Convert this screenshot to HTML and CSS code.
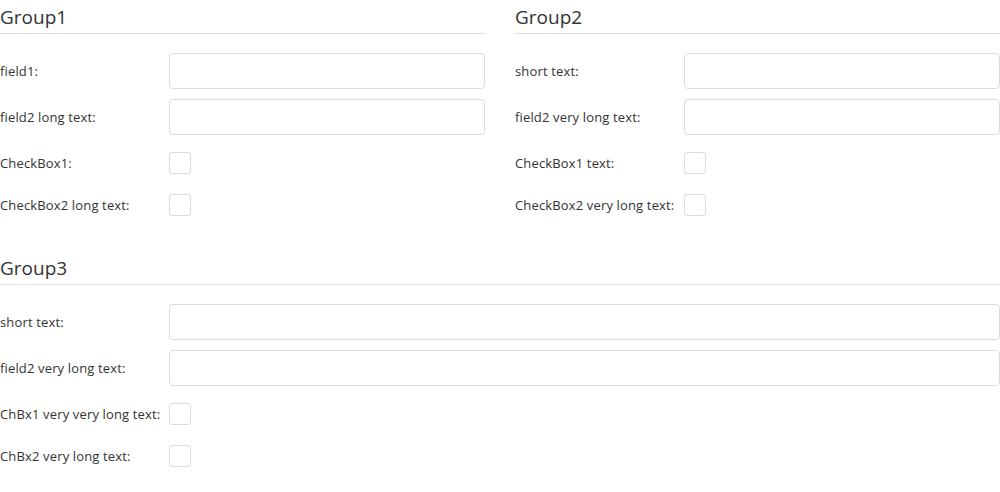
FILE: index.html
```html
<!DOCTYPE html>
<html>
<head>
<meta charset="utf-8">
<link rel="stylesheet" href="styles.css">
</head>
<body>
<div class="page">
  <div class="cols">
    <section class="group">
      <h2 class="title">Group1</h2>
      <div class="row"><label class="lbl">field1:</label><input class="inp" type="text"></div>
      <div class="row"><label class="lbl">field2 long text:</label><input class="inp" type="text"></div>
      <div class="row check"><label class="lbl">CheckBox1:</label><span class="cb"></span></div>
      <div class="row check"><label class="lbl">CheckBox2 long text:</label><span class="cb"></span></div>
    </section>
    <section class="group">
      <h2 class="title">Group2</h2>
      <div class="row"><label class="lbl">short text:</label><input class="inp" type="text"></div>
      <div class="row"><label class="lbl">field2 very long text:</label><input class="inp" type="text"></div>
      <div class="row check"><label class="lbl">CheckBox1 text:</label><span class="cb"></span></div>
      <div class="row check"><label class="lbl">CheckBox2 very long text:</label><span class="cb"></span></div>
    </section>
  </div>
  <section class="group wide">
    <h2 class="title">Group3</h2>
    <div class="row"><label class="lbl">short text:</label><input class="inp" type="text"></div>
    <div class="row"><label class="lbl">field2 very long text:</label><input class="inp" type="text"></div>
    <div class="row check"><label class="lbl">ChBx1 very very long text:</label><span class="cb"></span></div>
    <div class="row check"><label class="lbl">ChBx2 very long text:</label><span class="cb"></span></div>
  </section>
</div>
</body>
</html>
```
FILE: styles.css
```css
html, body {
  margin: 0;
  padding: 0;
  background: #fff;
}
body {
  font-family: "Open Sans", "Noto Sans", sans-serif;
  font-size: 13px;
  color: #333;
}
.page {
  width: 1000px;
}
.cols {
  display: grid;
  grid-template-columns: 485px 485px;
  column-gap: 30px;
}
.group {
  display: flex;
  flex-direction: column;
}
.wide {
  margin-top: 22px;
}
.title {
  margin: 0 0 19px 0;
  height: 34px;
  box-sizing: border-box;
  padding-top: 3px;
  font-size: 19px;
  font-weight: 400;
  line-height: 28px;
  color: #333;
  border-bottom: 1px solid #e0e0e0;
}
.row {
  display: flex;
  align-items: center;
  height: 36px;
  margin-bottom: 10px;
}
.row.check {
  height: 22px;
  margin-top: 7px;
  margin-bottom: 13px;
}
.lbl {
  width: 169px;
  flex: none;
  white-space: nowrap;
  letter-spacing: 0.15px;
}
.inp {
  flex: 1;
  height: 36px;
  box-sizing: border-box;
  margin: 0;
  border: 1px solid #dcdcdc;
  border-radius: 4px;
  background: #fff;
  outline: none;
  padding: 0 10px;
}
.cb {
  width: 22px;
  height: 22px;
  box-sizing: border-box;
  border: 1px solid #dcdcdc;
  border-radius: 3px;
  background: #fff;
}
```
